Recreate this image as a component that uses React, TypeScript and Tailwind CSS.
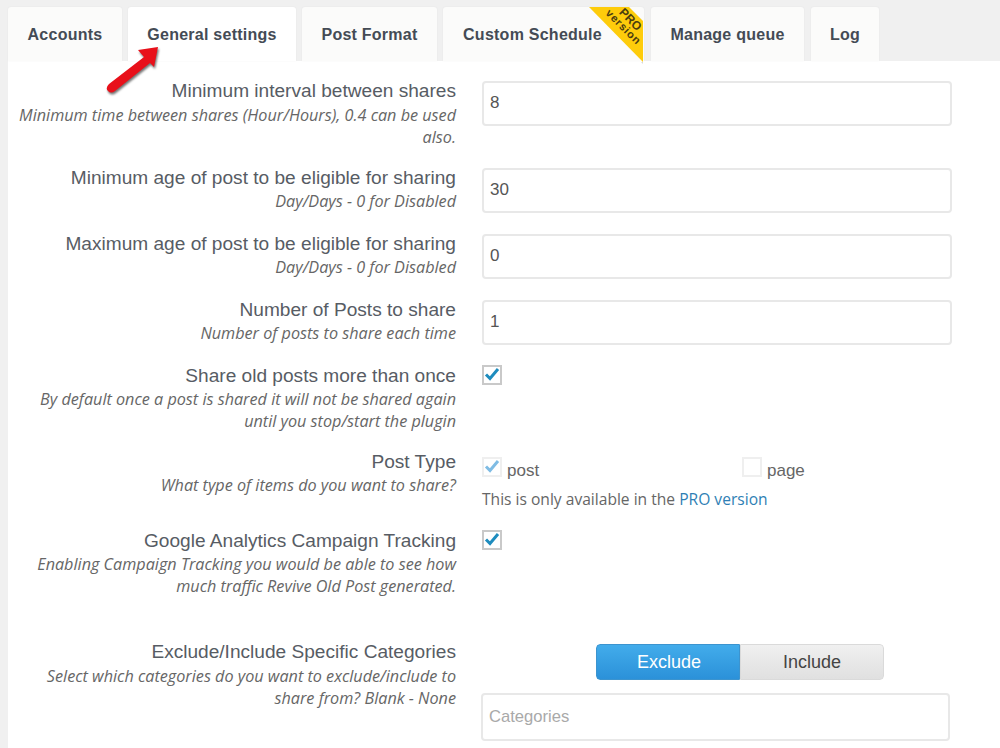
import React from 'react';

const tabs = [
	{ label: 'Accounts', width: 'w-[114px]' },
	{ label: 'General settings', width: 'w-[168px]', active: true },
	{ label: 'Post Format', width: 'w-[135px]' },
	{ label: 'Custom Schedule', width: 'w-[201px]', pro: true },
	{ label: 'Manage queue', width: 'w-[153px] ml-[1px]' },
	{ label: 'Log', width: 'w-[68px] ml-[1px]' },
];

function Tab({ label, width, active, pro }: { label: string; width: string; active?: boolean; pro?: boolean }) {
	return (
		<div className={`relative h-[54px] ${width} rounded-t-[3px] flex items-start pt-[17px] justify-center text-[16px] leading-[22px] font-bold tracking-[0.25px] text-[#444b55] shadow-[0_0_2px_rgba(0,0,0,0.06)] ${active ? 'bg-white' : 'bg-[#fbfbfa]'}`}>
			<span className={pro ? 'mr-[22px]' : ''}>{label}</span>
			{pro && (
				<div className="absolute top-0 right-0 w-[56px] h-[57px]">
					<svg width="56" height="57" viewBox="0 0 56 57" className="absolute inset-0">
						<polygon points="55,55 55,57 53,55" fill="#d8d8d8" />
						<polygon points="1,0 41,0 55,14 55,55" fill="#fecc0b" />
					</svg>
					<div className="absolute top-[6px] left-[17px] w-[44px] rotate-45 text-center text-[11px] leading-[10px] font-bold tracking-normal text-[#4a3d10]">
						<div className="text-[12px]">PRO</div>
						<div className="tracking-[0.8px]">version</div>
					</div>
				</div>
			)}
		</div>
	);
}

function Check({ faded }: { faded?: boolean }) {
	return (
		<div className={`-mt-[1px] w-[20px] h-[20px] border-2 flex items-center justify-center shrink-0 bg-white ${faded ? 'border-[#efefef]' : 'border-[#c9c9c9]'}`}>
			<svg width="16" height="16" viewBox="0 0 16 16" className="-mt-[3px]">
				<path d="M2 8.5 L6 12.5 L14 3" fill="none" stroke={faded ? '#7fbce4' : '#1e8cbe'} strokeWidth="3" />
			</svg>
		</div>
	);
}

function Label({ title, lines, gap = 'mt-[2px]' }: { title: string; lines: string[]; gap?: string }) {
	return (
		<div className="w-[448px] shrink-0 text-right">
			<div className="text-[19.1px] leading-[20px] text-[#575c64]">{title}</div>
			<div className={`${gap} text-[16.2px] leading-[22px] italic text-[#666] font-['Open_Sans',sans-serif]`}>
				{lines.map((l) => (
					<div key={l}>{l}</div>
				))}
			</div>
		</div>
	);
}

function TextBox({ value }: { value: string }) {
	return (
		<div className="w-[470px] h-[45px] border-2 border-[#e8e8e8] rounded-[4px] bg-white flex items-center px-[6px] pb-[2px] text-[17px] text-[#555]">
			{value}
		</div>
	);
}

export default function App() {
	return (
		<div className="w-[1000px] h-[748px] overflow-hidden bg-[#f0f0f0] font-['Liberation_Sans',sans-serif]">
			{/* Tabs */}
			<div className="h-[61px] pt-[7px] pl-[8px] flex gap-[6px] relative">
				{tabs.map((t) => (
					<Tab key={t.label} {...t} />
				))}
				<svg width="70" height="62" viewBox="0 0 70 62" className="absolute left-[100px] top-[40px] z-10 drop-shadow-[1px_2px_1px_rgba(0,0,0,0.55)]">
					<path d="M58 7 L38 10 L44 17 L9 44 Q5 48 8 51 Q11 54 15 51 L50 23 L54 27 Z" fill="#e8101a" />
				</svg>
			</div>

			{/* Form */}
			<div className="ml-[8px] h-[687px] bg-white pt-[20px]">
				<div className="flex gap-[26px] h-[87px]">
					<Label gap="mt-[3px]" title="Minimum interval between shares" lines={['Minimum time between shares (Hour/Hours), 0.4 can be used', 'also.']} />
					<TextBox value="8" />
				</div>
				<div className="flex gap-[26px] h-[66px]">
					<Label title="Minimum age of post to be eligible for sharing" lines={['Day/Days - 0 for Disabled']} />
					<TextBox value="30" />
				</div>
				<div className="flex gap-[26px] h-[66px]">
					<Label title="Maximum age of post to be eligible for sharing" lines={['Day/Days - 0 for Disabled']} />
					<TextBox value="0" />
				</div>
				<div className="flex gap-[26px] h-[66px]">
					<Label title="Number of Posts to share" lines={['Number of posts to share each time']} />
					<TextBox value="1" />
				</div>
				<div className="flex gap-[26px] h-[86px]">
					<Label title="Share old posts more than once" lines={['By default once a post is shared it will not be shared again', 'until you stop/start the plugin']} />
					<Check />
				</div>
				<div className="flex gap-[26px] h-[79px]">
					<Label title="Post Type" lines={['What type of items do you want to share?']} />
					<div className="pt-[6px]">
						<div className="flex">
							<div className="w-[260px] flex items-start gap-[5px]">
								<Check faded />
								<span className="text-[17px] leading-[18px] mt-[4px] text-[#666]">post</span>
							</div>
							<div className="flex items-start gap-[5px]">
								<div className="-mt-[1px] w-[20px] h-[20px] border-2 border-[#efefef] bg-white" />
								<span className="text-[17px] leading-[18px] mt-[4px] text-[#666]">page</span>
							</div>
						</div>
						<div className="mt-[8px] text-[15.6px] leading-[22px] text-[#666] font-['Open_Sans',sans-serif]">
							This is only available in the <span className="text-[#2f7fb5]">PRO version</span>
						</div>
					</div>
				</div>
				<div className="flex gap-[26px] h-[111px]">
					<Label title="Google Analytics Campaign Tracking" lines={['Enabling Campaign Tracking you would be able to see how', 'much traffic Revive Old Post generated.']} />
					<Check />
				</div>
				<div className="flex gap-[25px]">
					<Label gap="mt-[3px]" title="Exclude/Include Specific Categories" lines={['Select which categories do you want to exclude/include to', 'share from? Blank - None']} />
					<div>
						<div className="ml-[115px] mt-[2px] w-[288px] h-[36px] flex rounded-[4px] overflow-hidden text-[18px]">
							<div className="w-[144px] bg-linear-to-b from-[#42aceb] to-[#2b91d9] border border-[#3c94cf] rounded-l-[4px] text-white flex items-center justify-center pl-[2px]">Exclude</div>
							<div className="w-[144px] bg-linear-to-b from-[#f0f0f0] to-[#e0e0e0] border border-[#dadada] rounded-r-[4px] text-[#444] flex items-center justify-center">Include</div>
						</div>
						<div className="mt-[13px] w-[469px] h-[48px] border-2 border-[#e8e8e8] rounded-[4px] bg-white flex items-center px-[6px] text-[16.6px] text-[#a9a9a9]">
							Categories
						</div>
					</div>
				</div>
			</div>
		</div>
	);
}
